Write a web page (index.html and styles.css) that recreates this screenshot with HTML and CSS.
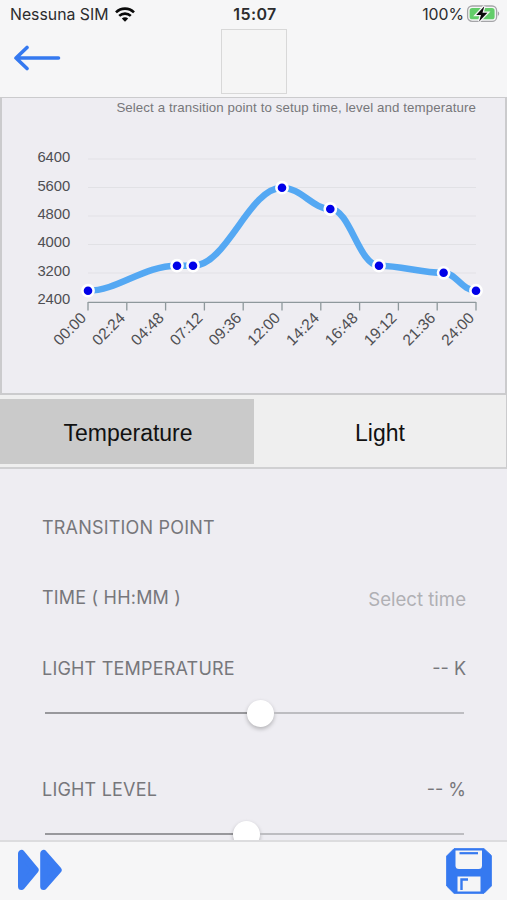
FILE: index.html
```html
<!DOCTYPE html>
<html lang="it">
<head>
  <meta charset="UTF-8">
  <title>Transition points</title>
  <meta name="viewport" content="width=device-width, initial-scale=1.0">
  <link rel="stylesheet" href="styles.css">
</head>
<body>
  <div class="screen">
    <div class="status-bar">
      <div class="carrier">
        <span>Nessuna SIM</span>
        <svg class="wifi" width="20" height="15" viewBox="0 0 20 15">
          <g fill="none" stroke="#0a0a0a" stroke-width="2.6">
            <path d="M1 5.4C6 .4 14 .4 19 5.4"/>
            <path d="M4.2 8.9C7.5 5.8 12.5 5.8 15.8 8.9"/>
          </g>
          <path d="M10 14.7L6.8 11.5C8.6 9.9 11.4 9.9 13.2 11.5Z" fill="#0a0a0a"/>
        </svg>
      </div>
      <span class="clock">15:07</span>
      <div class="battery">
        <span>100%</span>
        <svg width="34" height="18" viewBox="0 0 34 18">
          <rect x="1.6" y="1" width="29" height="15.4" rx="4.5" fill="none" stroke="#a5a5a8" stroke-width="1.3"/>
          <rect x="3.6" y="3.1" width="25" height="11.2" rx="2.6" fill="#62cd69"/>
          <path d="M31.9 6.5C33.6 7 33.6 10.2 31.9 10.7Z" fill="#a5a5a8"/>
          <path d="M18.3 1.2L10.2 9.9H15L13.1 16.4L21.4 7.7H16.5Z" fill="#0a0a0a" stroke="#f5f5f6" stroke-width="2.6" paint-order="stroke"/>
        </svg>
      </div>
    </div>

    <header class="nav-bar">
      <svg class="back" width="48" height="26" viewBox="0 0 48 26">
        <path d="M45.5 13H3M14 2.5L3 13L14 23.5" fill="none" stroke="#3579f0" stroke-width="3.6" stroke-linecap="round" stroke-linejoin="round"/>
      </svg>
      <div class="logo"></div>
    </header>

    <main class="content">
      <section class="chart">
        <p class="hint">Select a transition point to setup time, level and temperature</p>
        <svg class="plot" width="503" height="274" viewBox="2 119 503 274">
          <path class="grid" d="M88 159H476M88 187.5H476M88 216H476M88 244.5H476M88 273H476"/>
          <path class="axis" d="M88 302.3H476M88 302V310.5M126.8 302V310.5M165.6 302V310.5M204.4 302V310.5M243.2 302V310.5M282 302V310.5M320.8 302V310.5M359.6 302V310.5M398.4 302V310.5M437.2 302V310.5M476 302V310.5"/>
          <g class="y-labels">
            <text x="70.3" y="161.5">6400</text>
            <text x="70.3" y="190.5">5600</text>
            <text x="70.3" y="219">4800</text>
            <text x="70.3" y="247.3">4000</text>
            <text x="70.3" y="275.8">3200</text>
            <text x="70.3" y="304">2400</text>
          </g>
          <g class="x-labels">
            <text transform="translate(87.2 319) rotate(-45)">00:00</text>
            <text transform="translate(126 319) rotate(-45)">02:24</text>
            <text transform="translate(164.8 319) rotate(-45)">04:48</text>
            <text transform="translate(203.6 319) rotate(-45)">07:12</text>
            <text transform="translate(242.4 319) rotate(-45)">09:36</text>
            <text transform="translate(281.2 319) rotate(-45)">12:00</text>
            <text transform="translate(320 319) rotate(-45)">14:24</text>
            <text transform="translate(358.8 319) rotate(-45)">16:48</text>
            <text transform="translate(397.6 319) rotate(-45)">19:12</text>
            <text transform="translate(436.4 319) rotate(-45)">21:36</text>
            <text transform="translate(475.2 319) rotate(-45)">24:00</text>
          </g>
          <path class="curve" d="M88 290.7C118 290.7 143 265.7 177 265.7H193C227 265.7 249 187.7 282 187.7C301 187.7 313 209 330.3 209C350 209 359 265.7 379 265.7C402 265.7 420 272.8 443.5 272.8C456 272.8 462 290.7 476 290.7"/>
          <g class="points">
            <circle cx="88" cy="290.7" r="5.6"/>
            <circle cx="177" cy="265.7" r="5.6"/>
            <circle cx="193" cy="265.7" r="5.6"/>
            <circle cx="282" cy="187.7" r="5.6"/>
            <circle cx="330.3" cy="209" r="5.6"/>
            <circle cx="379" cy="265.7" r="5.6"/>
            <circle cx="443.6" cy="272.8" r="5.6"/>
            <circle cx="476" cy="290.7" r="5.6"/>
          </g>
        </svg>
      </section>

      <div class="tabs">
        <div class="tab active">Temperature</div>
        <div class="tab">Light</div>
      </div>

      <section class="settings">
        <div class="row title"><span class="label">TRANSITION POINT</span></div>
        <div class="row"><span class="label">TIME ( HH:MM )</span><span class="value placeholder">Select time</span></div>
        <div class="row"><span class="label">LIGHT TEMPERATURE</span><span class="value">-- K</span></div>
        <div class="slider">
          <div class="track filled"></div>
          <div class="knob"></div>
          <div class="track"></div>
        </div>
        <div class="row level"><span class="label">LIGHT LEVEL</span><span class="value">-- %</span></div>
        <div class="slider low">
          <div class="track filled"></div>
          <div class="knob"></div>
          <div class="track"></div>
        </div>
      </section>
    </main>

    <footer class="toolbar">
      <svg width="46" height="44" viewBox="0 0 46 44">
        <g fill="#3a7cf2" stroke="#3a7cf2" stroke-width="7" stroke-linejoin="round">
          <path d="M4.5 4.5V37.5L18.2 21Z"/>
          <path d="M26.7 4.5V37.5L41.2 21Z"/>
        </g>
      </svg>
      <svg class="save" width="46" height="46" viewBox="0 0 46 46">
        <path d="M8 .7H38L45.3 7.5V38L38 45.3H8L.7 38V8Z" fill="#3579f0" stroke="#3579f0" stroke-linejoin="round"/>
        <path d="M9.5 2.5H36V17.5Q36 21 32.5 21H13Q9.5 21 9.5 17.5Z" fill="#f5f5f6"/>
        <path d="M13.5 5.2H32" stroke="#3579f0" stroke-width="2.2"/>
        <path d="M11.5 28.5H34.5V43.5H11.5Z" fill="#f5f5f6"/>
        <path d="M15.5 42V31.5H22" fill="none" stroke="#3579f0" stroke-width="2.4"/>
      </svg>
    </footer>
  </div>
</body>
</html>
```
FILE: styles.css
```css
* {
  box-sizing: border-box;
}
body {
  margin: 0;
  background: #eeedf2;
  font-family: Inter, "Liberation Sans", sans-serif;
}
.screen {
  display: flex;
  flex-direction: column;
  height: 900px;
  overflow: hidden;
}

.status-bar {
  display: grid;
  grid-template-columns: 1fr auto 1fr;
  align-items: center;
  height: 29px;
  padding: 0 7px 1px 10px;
  background: #f6f6f7;
  color: #2c2c2e;
  font-size: 15.8px;
  flex-shrink: 0;
}
.carrier {
  display: flex;
  align-items: center;
  gap: 7px;
}
.clock {
  font-weight: 600;
  font-size: 16px;
  letter-spacing: 0.4px;
}
.battery {
  display: flex;
  align-items: center;
  justify-content: flex-end;
  gap: 2px;
}

.nav-bar {
  display: grid;
  grid-template-columns: 1fr auto 1fr;
  height: 68px;
  background: #f6f6f7;
  flex-shrink: 0;
}
.back {
  margin: 16px 0 0 13px;
}
.logo {
  width: 66px;
  height: 65px;
  border: 1px solid #d8d8d8;
  background: #f5f5f5;
}

.content {
  flex: 1;
  min-height: 0;
  overflow: hidden;
}
.chart {
  height: 298px;
  border: 2px solid #cbcbcd;
  border-top-width: 1px;
  font-family: "Liberation Sans", Arial, sans-serif;
}
.hint {
  height: 21px;
  margin: 0;
  padding-right: 29px;
  line-height: 20px;
  font-size: 13.3px;
  letter-spacing: 0.09px;
  text-align: right;
  color: #77777a;
}
.plot {
  display: block;
}
.grid {
  stroke: #e1e1e5;
  stroke-width: 1.2;
}
.axis {
  fill: none;
  stroke: #8e989c;
  stroke-width: 1.3;
}
.y-labels,
.x-labels {
  fill: #4f4f53;
  font-size: 14.8px;
  text-anchor: end;
}
.x-labels {
  font-size: 15.5px;
}
.curve {
  fill: none;
  stroke: #54a8f3;
  stroke-width: 6.5;
}
.points {
  fill: #0000e8;
  stroke: #fff;
  stroke-width: 2.6;
}

.tabs {
  display: flex;
  height: 74px;
  padding: 4px 0 3px;
  background: #efefef;
  border-right: 1px solid #cbcbcd;
  border-bottom: 2px solid #d0d0d2;
}
.tab {
  flex: 1;
  text-align: center;
  font: 23px/68px "Liberation Sans", Arial, sans-serif;
  color: #111;
}
.tab.active {
  flex: 0 0 254px;
  padding-left: 2px;
  background: #cacaca;
}

.settings {
  padding: 23px 41px 0 42px;
  color: #77777b;
  font-size: 18px;
}
.row {
  display: flex;
  justify-content: space-between;
  align-items: center;
  height: 71px;
}
.row.title {
  height: 70px;
}
.label {
  letter-spacing: 0.2px;
}
.placeholder {
  padding-top: 2px;
  font-size: 18.6px;
  color: #b0b0b4;
}
.slider {
  display: flex;
  align-items: center;
  height: 28px;
  margin: -5px 2px 0 3px;
}
.track {
  flex: 1;
  height: 2px;
  background: #bdbdc1;
}
.track.filled {
  flex: none;
  width: 202px;
  background: #98989c;
}
.knob {
  width: 27px;
  height: 27px;
  border-radius: 50%;
  background: #fff;
  box-shadow: 0 2px 4px rgba(0, 0, 0, 0.25);
}
.row.level {
  margin-top: 27px;
}
.slider.low .filled {
  width: 188px;
}

.toolbar {
  display: flex;
  justify-content: space-between;
  height: 60px;
  padding: 7px 15px 0 17px;
  background: #f6f6f7;
  border-top: 2px solid #dcdcde;
  flex-shrink: 0;
}
.save {
  margin-top: -1px;
}
```
